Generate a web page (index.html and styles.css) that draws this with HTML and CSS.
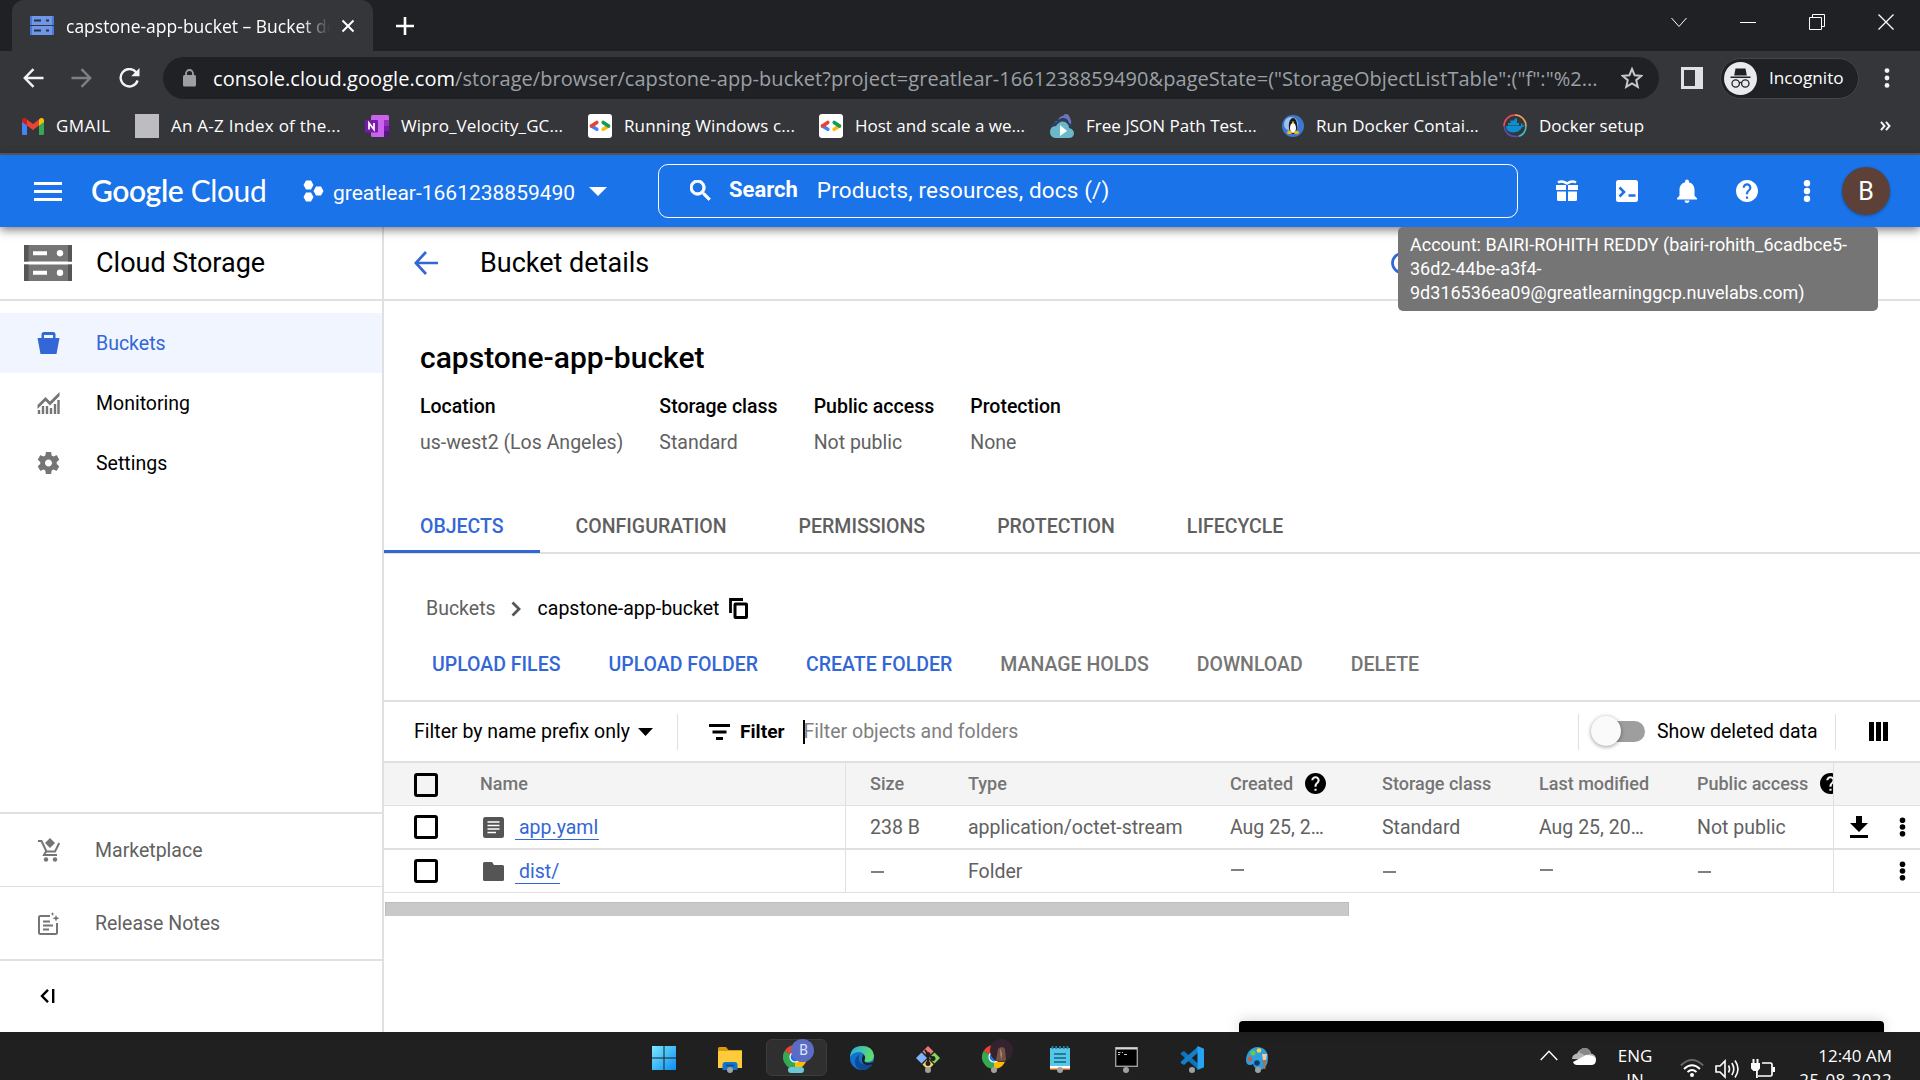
FILE: index.html
```html
<!DOCTYPE html>
<html lang="en">
<head>
<meta charset="utf-8">
<title>capstone-app-bucket – Bucket details</title>
<link rel="stylesheet" href="styles.css">
</head>
<body>
<svg class="defs" width="0" height="0">
  <defs>
    <symbol id="more" viewBox="0 0 8 24"><circle cx="4" cy="4.3" r="3.2"/><circle cx="4" cy="12" r="3.2"/><circle cx="4" cy="19.7" r="3.2"/></symbol>
    <symbol id="help" viewBox="2 2 20 20"><path d="M12 2C6.48 2 2 6.48 2 12s4.48 10 10 10 10-4.48 10-10S17.52 2 12 2zm1 17h-2v-2h2v2zm2.07-7.75l-.9.92C13.45 12.9 13 13.5 13 15h-2v-.5c0-1.1.45-2.1 1.17-2.83l1.24-1.26c.37-.36.59-.86.59-1.41 0-1.1-.9-2-2-2s-2 .9-2 2H8c0-2.21 1.79-4 4-4s4 1.79 4 4c0 .88-.36 1.68-.93 2.25z"/></symbol>
    <symbol id="gdev" viewBox="0 0 24 24"><rect width="24" height="24" rx="3" fill="#fff"/><g fill="none" stroke-width="3.6" stroke-linecap="round"><path d="M3.5 12l5.3 3.2" stroke="#4285f4"/><path d="M3.5 12l5.3-3.6" stroke="#ea4335"/><path d="M20.5 12l-5.3 3.2" stroke="#fbbc04"/><path d="M20.5 12l-5.3-3.6" stroke="#0f9d58"/></g></symbol>
    <symbol id="chrome" viewBox="0 0 24 24"><path d="M12 12L1.6 6A12 12 0 0 1 22.4 6z" fill="#ea4335"/><path d="M12 12L22.4 6A12 12 0 0 1 12 24z" fill="#fbbc04"/><path d="M12 12L12 24A12 12 0 0 1 1.6 6z" fill="#34a853"/><circle cx="12" cy="12" r="5.6" fill="#fff"/><circle cx="12" cy="12" r="4.4" fill="#1a73e8"/></symbol>
  </defs>
</svg>

<div class="browser">
  <div class="tabstrip">
    <div class="tab">
      <svg class="favicon" width="24" height="19" viewBox="0 0 24 19"><path fill="#7096e6" d="M0 0h24v9H0zM0 10h24v9H0z"/><path fill="#4b78d8" d="M0 0h2v9H0zM22 0h2v9h-2zM0 10h2v9H0zM22 10h2v9h-2z"/><path fill="#26324b" d="M4 3.5h7v2H4zM16 3.5h3v2h-3zM4 13.5h7v2H4zM16 13.5h3v2h-3z"/></svg>
      <span class="tab-title">capstone-app-bucket – Bucket details</span>
      <svg class="tab-close" width="14" height="14" viewBox="0 0 14 14"><path d="M1.5 1.5l11 11M12.5 1.5l-11 11" stroke="#fff" stroke-width="2"/></svg>
    </div>
    <svg class="tab-new" width="18" height="18" viewBox="0 0 18 18"><path d="M9 0v18M0 9h18" stroke="#fff" stroke-width="2.6"/></svg>
    <div class="win-controls">
      <svg width="16" height="16" viewBox="0 0 16 16"><path d="M.5 4l7.500 8.500L15.500 4"/></svg>
      <svg width="16" height="16" viewBox="0 0 16 16"><path d="M0 8.500h16"/></svg>
      <svg width="16" height="16" viewBox="0 0 16 16"><path d="M.5 3.500h12v12H.5zM3.500 3V.5h12v12H13"/></svg>
      <svg width="16" height="16" viewBox="0 0 16 16"><path d="M.5.500l15 15M15.500.500l-15 15" stroke-width="1.300"/></svg>
    </div>
  </div>
  <div class="toolbar">
    <div class="nav">
      <svg width="21" height="20" viewBox="0 0 21 20"><path d="M10.500 1.200L1.800 10l8.700 8.800M1.800 10H20.500" stroke="#f1f3f4"/></svg>
      <svg width="21" height="20" viewBox="0 0 21 20"><path d="M10.500 1.200l8.700 8.800-8.700 8.800M19.200 10H.5" stroke="#7d8084"/></svg>
      <svg width="21" height="20" viewBox="0 0 21 20"><path d="M17.300 4.500A8.700 8.700 0 1 0 18.600 12.500" stroke="#f1f3f4"/><path d="M20.500 0v8.300h-8.300z" fill="#f1f3f4" stroke="none"/></svg>
    </div>
    <div class="omnibox">
      <svg width="13" height="18" viewBox="0 0 13 18"><path d="M3 8V4.500a3.500 3.500 0 0 1 7 0V8" fill="none" stroke="#9aa0a6" stroke-width="1.800"/><rect y="6" width="13" height="11.500" rx="1.500" fill="#9aa0a6"/></svg>
      <span class="url"><b>console.cloud.google.com</b>/storage/browser/capstone-app-bucket?project=greatlear-1661238859490&amp;pageState=("StorageObjectListTable":("f":"%2...</span>
      <svg class="star" width="22" height="22" viewBox="0 0 22 22"><path d="M11 2l2.600 6.200 6.700.600-5.100 4.400 1.600 6.600-5.800-3.500-5.800 3.500 1.600-6.600L1.700 8.800l6.700-.600z" fill="none" stroke="#c4c7cb" stroke-width="2"/></svg>
    </div>
    <svg class="panel" width="22" height="22" viewBox="0 0 22 22"><path fill="#dfe1e5" fill-rule="evenodd" d="M0 0h22v22H0zM3 3v16h11V3z"/></svg>
    <div class="incognito">
      <svg width="33" height="33" viewBox="0 0 33 33"><circle cx="16.500" cy="16.500" r="16.500" fill="#e8eaed"/><path fill="#202124" d="M11.500 6.500h10l1.300 7h-12.600zM6.500 14.500h20v1.500h-20z"/><g fill="none" stroke="#202124" stroke-width="1.300"><circle cx="11.700" cy="21.500" r="3.700"/><circle cx="21.300" cy="21.500" r="3.700"/><path d="M15.400 20.800q1.100-.8 2.200 0"/></g></svg>
      <span>Incognito</span>
    </div>
    <svg class="menu-dots" width="6" height="20" viewBox="0 0 6 20"><g fill="#f1f3f4"><circle cx="3" cy="2.600" r="2.400"/><circle cx="3" cy="10" r="2.400"/><circle cx="3" cy="17.400" r="2.400"/></g></svg>
  </div>
  <div class="bookmarks">
    <div class="bm bm-1"><svg width="22" height="17" viewBox="0 0 22 17"><path fill="#4285f4" d="M0 3h5v14H1.500A1.500 1.500 0 0 1 0 15.500z"/><path fill="#34a853" d="M17 3h5v12.500a1.500 1.500 0 0 1-1.500 1.500H17z"/><path fill="#ea4335" d="M5 1.500l6 4.500 6-4.500v6L11 12 5 7.500z"/><path fill="#c5221f" d="M0 2.500A2.400 2.400 0 0 1 4 .6l1 .9v6L0 4z"/><path fill="#fbbc04" d="M22 2.500A2.400 2.400 0 0 0 18 .6l-1 .9v6L22 4z"/></svg><span>GMAIL</span></div>
    <div class="bm bm-2"><i class="blank"></i><span>An A-Z Index of the...</span></div>
    <div class="bm bm-3"><svg width="24" height="22" viewBox="0 0 24 22"><rect x="6" width="18" height="22" rx="1.500" fill="#ca64ea"/><path d="M19 5h5v6h-5z" fill="#9332bf"/><path d="M19 11h5v6h-5z" fill="#7719aa"/><path d="M19 16h5v6h-5z" fill="#5b1380"/><rect y="5" width="13" height="12.500" rx="1" fill="#7719aa"/><path d="M4 14.500V8l5 6.500V8" fill="none" stroke="#fff" stroke-width="1.700"/></svg><span>Wipro_Velocity_GC...</span></div>
    <div class="bm bm-4"><svg width="24" height="24"><use href="#gdev"/></svg><span>Running Windows c...</span></div>
    <div class="bm bm-5"><svg width="24" height="24"><use href="#gdev"/></svg><span>Host and scale a we...</span></div>
    <div class="bm bm-6"><svg width="24" height="24" viewBox="0 0 24 24"><path d="M3 11q1-4 5-4 1-5 5-5 1-2 3-2 3 0 4 4 2 3 1 6z" fill="#6f74b8"/><path d="M1 13q1-5 6-5 2-4 6-4 5 0 6 5 3 1 4 4z" fill="#2b3f63"/><path d="M5 24q-5-1-5-6 0-6 6-6 4-6 9-4 4 2 4 6 5 1 5 6-1 4-5 4z" fill="#6bb8c8"/><path d="M10 11l7 6-7 5z" fill="#fff"/></svg><span>Free JSON Path Test...</span></div>
    <div class="bm bm-7"><svg width="22" height="22" viewBox="0 0 22 22"><circle cx="11" cy="11" r="11" fill="#3c78d0"/><circle cx="9" cy="9" r="7" fill="#9cc2ee"/><ellipse cx="11" cy="11" rx="4.200" ry="8" fill="#16181c"/><ellipse cx="11" cy="13" rx="3" ry="5" fill="#fff"/><ellipse cx="7.500" cy="17.500" rx="2.600" ry="1.800" fill="#f5b417"/><ellipse cx="14.500" cy="17.500" rx="2.600" ry="1.800" fill="#f5b417"/><path d="M9.500 6.500h3L11 9z" fill="#f5b417"/></svg><span>Run Docker Contai...</span></div>
    <div class="bm bm-8"><svg width="24" height="24" viewBox="0 0 24 24"><g fill="none" stroke-width="1.600"><path d="M1 12A11 11 0 0 1 12 1" stroke="#ef4d5d"/><path d="M12 1a11 11 0 0 1 11 11" stroke="#f2a65a"/><path d="M23 12a11 11 0 0 1-7 10.200" stroke="#35c6c9"/><path d="M16 22.200Q3 24 1 12" stroke="#5b4ba8"/></g><path d="M3 12h15q-.5-2 .6-3 1.200 1 1 2.400 1.600-.4 2.400.2-.8 1.500-2.800 1.500Q17 18.500 10 18.500 3.500 18.500 3 12z" fill="#0b8fd0"/><path d="M5 9h11v2.500H5zM7.500 6.500H14V9H7.500zM11.500 4.500H14v2h-2.500z" fill="#0b8fd0"/></svg><span>Docker setup</span></div>
    <svg class="overflow" width="11" height="10" viewBox="0 0 11 10"><path d="M1 .8L4.500 5 1 9.200M6 .8L9.500 5 6 9.200" fill="none" stroke="#f1f3f4" stroke-width="2"/></svg>
  </div>
</div>

<header class="gc-header">
  <svg class="burger" width="28" height="19" viewBox="0 0 28 19"><path d="M0 1.500h28M0 9.500h28M0 17.500h28" stroke="#fff" stroke-width="2.800"/></svg>
  <span class="logo"><b>Google</b> Cloud</span>
  <div class="project">
    <svg width="21" height="22" viewBox="0 0 21 22"><g fill="#fff"><path d="M3 .5h5l2.500 4.500L8 9.500H3L.5 5zM3 12.500h5l2.500 4.500L8 21.500H3L.5 17zM13 6.500h5l2.500 4.500-2.500 4.500h-5L10.500 11z"/></g></svg>
    <span>greatlear-1661238859490</span>
    <svg width="18" height="9" viewBox="0 0 18 9"><path d="M0 0h18L9 9z" fill="#fff"/></svg>
  </div>
  <div class="search">
    <svg width="21" height="21" viewBox="3 3 18 18"><path fill="#fff" stroke="#fff" stroke-width=".8" d="M15.500 14h-.79l-.28-.27C15.410 12.590 16 11.110 16 9.500 16 5.910 13.090 3 9.500 3S3 5.910 3 9.500 5.910 16 9.500 16c1.610 0 3.090-.59 4.230-1.570l.27.28v.79l5 4.990L20.490 19l-4.990-5zm-6 0C7.010 14 5 11.990 5 9.500S7.010 5 9.500 5 14 7.010 14 9.500 11.990 14 9.500 14z"/></svg>
    <b>Search</b><span>Products, resources, docs (/)</span>
  </div>
  <div class="gc-icons">
    <svg width="22" height="22" viewBox="0 0 22 22"><path fill="#fff" d="M0 5h10v5H0zM12 5h10v5H12zM1 11.500h9V21H2.500A1.500 1.500 0 0 1 1 19.500zM12 11.500h9v8a1.500 1.500 0 0 1-1.500 1.500H12z"/><path d="M2 2.500Q6 0 11 3.500 16 0 20 2.500" fill="none" stroke="#fff" stroke-width="2.600"/></svg>
    <svg width="22" height="22" viewBox="0 0 22 22"><rect width="22" height="22" rx="2.500" fill="#fff"/><path d="M3.500 7.500L8 12l-4.500 4.500M12.500 15.500h7" fill="none" stroke="#1a73e8" stroke-width="2.600"/></svg>
    <svg width="20" height="24" viewBox="4 2 16 20" preserveAspectRatio="none"><path fill="#fff" d="M12 22c1.100 0 2-.9 2-2h-4c0 1.100.9 2 2 2zm6-6v-5c0-3.070-1.630-5.640-4.500-6.320V4c0-.83-.67-1.500-1.500-1.500s-1.500.67-1.500 1.500v.68C7.640 5.360 6 7.920 6 11v5l-2 2v1h16v-1l-2-2z"/></svg>
    <svg width="22" height="22" fill="#fff"><use href="#help"/></svg>
    <svg width="8" height="24" fill="#fff"><use href="#more"/></svg>
  </div>
  <div class="avatar">B</div>
</header>

<div class="console">
  <aside class="sidebar">
    <div class="product">
      <svg width="48" height="36" viewBox="0 0 48 36"><path fill="#757575" d="M0 0h48v16.500H0zM0 19.500h48V36H0z"/><path fill="#555" d="M0 0h4.500v16.500H0zM44 0h4v16.500h-4zM0 19.500h4.500V36H0zM44 19.500h4V36h-4z"/><path fill="#fff" d="M9 6.200h14v4H9zM9 25.700h14v4H9z"/><circle cx="36" cy="8.200" r="3.200" fill="#fff"/><circle cx="36" cy="27.700" r="3.200" fill="#fff"/></svg>
      <span>Cloud Storage</span>
    </div>
    <nav class="side-nav">
      <a class="side-item active"><svg width="22" height="22" viewBox="0 0 22 22"><path fill="#3367d6" fill-rule="evenodd" d="M4 6V2.500Q4 0 6.500 0h9Q18 0 18 2.500V6h4l-3 16H3L0 6zM6.500 6h9V3h-9z"/></svg><span>Buckets</span></a>
      <a class="side-item"><svg width="22" height="22" viewBox="0 0 22 22"><path d="M0 13L8 5l4.500 4.500L22 0v4l-9.500 9.500L8 9l-8 8z" fill="#757575"/><path d="M1.500 22v-4M5.500 22v-8M9.500 22v-8M13.500 22v-6M17.500 22V12M21 22V8" stroke="#757575" stroke-width="2.400"/></svg><span>Monitoring</span></a>
      <a class="side-item"><svg width="22" height="22" viewBox="2 2 20 20"><path fill="#757575" d="M19.430 12.980c.04-.32.07-.64.07-.98s-.03-.66-.07-.98l2.110-1.650c.19-.15.24-.42.12-.64l-2-3.460c-.12-.22-.39-.3-.61-.22l-2.490 1c-.52-.4-1.080-.73-1.690-.98l-.38-2.650C14.460 2.180 14.250 2 14 2h-4c-.25 0-.46.18-.49.42l-.38 2.650c-.61.25-1.170.59-1.690.98l-2.490-1c-.23-.09-.49 0-.61.22l-2 3.460c-.13.22-.07.49.12.64l2.110 1.650c-.04.32-.07.65-.07.98s.03.66.07.98l-2.110 1.650c-.19.15-.24.42-.12.64l2 3.460c.12.22.39.3.61.22l2.490-1c.52.4 1.080.73 1.690.98l.38 2.650c.03.24.24.42.49.42h4c.25 0 .46-.18.49-.42l.38-2.650c.61-.25 1.170-.59 1.690-.98l2.490 1c.23.09.49 0 .61-.22l2-3.460c.12-.22.07-.49-.12-.64l-2.110-1.650zM12 15.200c-1.770 0-3.200-1.430-3.200-3.200s1.430-3.200 3.200-3.200 3.200 1.430 3.200 3.200-1.430 3.200-3.200 3.200z"/></svg><span>Settings</span></a>
    </nav>
    <div class="side-foot">
      <a class="foot-item"><svg width="22" height="24" viewBox="0 0 22 24"><g fill="none" stroke="#757575" stroke-width="2"><path d="M0 3h3.500l5 10.500h8.500L21.200 5M8 13.500l-2 3.500h13"/></g><path d="M12 0l5 5-5 5-5-5z" fill="#757575"/><circle cx="8" cy="21.500" r="2.200" fill="#757575"/><circle cx="17" cy="21.500" r="2.200" fill="#757575"/></svg><span>Marketplace</span></a>
      <a class="foot-item"><svg width="22" height="23" viewBox="0 0 22 23"><path d="M12 4H2.500Q1 4 1 5.500v15Q1 22 2.500 22h15q1.500 0 1.500-1.500V11M5 9.500h7M5 13.500h10M5 17.500h6" fill="none" stroke="#757575" stroke-width="2"/><path d="M18 3l1 2.300L21.500 6.200 19 7.200 18 9.500l-1-2.300-2.500-1L17 5.300zM14.500 0l.6 1.400L16.500 2l-1.400.6-.6 1.400-.6-1.400L12.500 2l1.400-.6z" fill="#757575"/></svg><span>Release Notes</span></a>
      <a class="foot-item collapse"><svg width="15" height="14" viewBox="0 0 15 14"><path d="M8 .8L2 7l6 6.200M13.200 0v14" fill="none" stroke="#000" stroke-width="2.400"/></svg></a>
    </div>
  </aside>

  <main class="main">
    <div class="page-head">
      <svg width="24" height="24" viewBox="0 0 24 24"><path d="M12 1L1.800 12 12 23M1.800 12H24" fill="none" stroke="#3367d6" stroke-width="2.700"/></svg>
      <h1>Bucket details</h1>
      <svg class="refresh" width="24" height="24" viewBox="0 0 24 24"><circle cx="12" cy="12" r="9.500" fill="none" stroke="#3367d6" stroke-width="2.700"/></svg>
    </div>
    <section class="summary">
      <h2>capstone-app-bucket</h2>
      <dl class="facts">
        <div><dt>Location</dt><dd>us-west2 (Los Angeles)</dd></div>
        <div><dt>Storage class</dt><dd>Standard</dd></div>
        <div><dt>Public access</dt><dd>Not public</dd></div>
        <div><dt>Protection</dt><dd>None</dd></div>
      </dl>
    </section>
    <div class="tabs"><a class="current">OBJECTS</a><a>CONFIGURATION</a><a>PERMISSIONS</a><a>PROTECTION</a><a>LIFECYCLE</a></div>
    <div class="crumbs">
      <span class="muted">Buckets</span>
      <svg width="10" height="16" viewBox="0 0 10 16"><path d="M1.500 1.500L8 8l-6.500 6.500" fill="none" stroke="#555" stroke-width="2.800"/></svg>
      <span class="here">capstone-app-bucket</span>
      <svg class="copy" width="19" height="21" viewBox="0 0 19 21"><path d="M1.500 15V1.500H14" fill="none" stroke="#000" stroke-width="2.800"/><rect x="6" y="6" width="11.500" height="13.500" rx=".5" fill="none" stroke="#000" stroke-width="3"/></svg>
    </div>
    <div class="actions"><a>UPLOAD FILES</a><a>UPLOAD FOLDER</a><a>CREATE FOLDER</a><a class="off">MANAGE HOLDS</a><a class="off">DOWNLOAD</a><a class="off">DELETE</a></div>
    <div class="filterbar">
      <div class="scope">Filter by name prefix only <svg width="15" height="8" viewBox="0 0 15 8"><path d="M0 0h15L7.500 8z"/></svg></div>
      <div class="filter">
        <svg width="21" height="16" viewBox="0 0 21 16"><path d="M0 1.500h21M3.500 8h14M7 14.500h7" stroke="#000" stroke-width="2.900"/></svg>
        <b>Filter</b>
        <span class="field">Filter objects and folders</span>
      </div>
      <div class="deleted"><i class="switch"></i><span>Show deleted data</span></div>
      <div class="columns"><svg width="19" height="19" viewBox="0 0 19 19"><path d="M0 0h5v19H0zM7 0h5v19H7zM14 0h5v19h-5z"/></svg></div>
    </div>
    <div class="grid">
      <div class="row head">
        <div class="c-check"><i class="box"></i></div><div class="c-name">Name</div><div>Size</div><div>Type</div><div class="with-help">Created <svg width="21" height="21"><use href="#help"/></svg></div><div>Storage class</div><div>Last modified</div><div class="with-help c-access">Public access <svg width="21" height="21"><use href="#help"/></svg></div><div class="c-end"></div>
      </div>
      <div class="row first">
        <div class="c-check"><i class="box"></i></div>
        <div class="c-name link"><svg width="21" height="21" viewBox="0 0 21 21"><rect width="21" height="21" rx="2.500" fill="#555"/><path d="M4.500 5h12M4.500 8.500h12M4.500 12h12M4.500 15.500h8.500" stroke="#fff" stroke-width="1.600"/></svg><a>app.yaml</a></div>
        <div>238 B</div><div>application/octet-stream</div><div>Aug 25, 2…</div><div>Standard</div><div>Aug 25, 20…</div><div class="c-access">Not public</div>
        <div class="c-end"><svg width="18" height="22" viewBox="0 0 18 22"><path d="M6 0h6v7h6l-9 9-9-9h6zM0 19h18v3H0z"/></svg><svg width="7" height="22"><use href="#more"/></svg></div>
      </div>
      <div class="row second">
        <div class="c-check"><i class="box"></i></div>
        <div class="c-name link"><svg width="21" height="19" viewBox="0 0 21 19"><path d="M1.500 0H9l2 3h8.500Q21 3 21 4.500v13Q21 19 19.500 19h-18Q0 19 0 17.500v-16Q0 0 1.500 0z" fill="#555"/></svg><a>dist/</a></div>
        <div><i class="dash"></i></div><div>Folder</div><div><i class="dash high"></i></div><div><i class="dash"></i></div><div><i class="dash high"></i></div><div class="c-access"><i class="dash"></i></div>
        <div class="c-end"><svg width="7" height="22"><use href="#more"/></svg></div>
      </div>
    </div>
    <div class="scrollbar"></div>
    <div class="toast"></div>
  </main>
</div>

<div class="tooltip">Account: BAIRI-ROHITH REDDY (bairi-rohith_6cadbce5-<br>36d2-44be-a3f4-<br>9d316536ea09@greatlearninggcp.nuvelabs.com)</div>

<footer class="taskbar">
  <div class="apps">
    <div class="app"><svg width="24" height="24" viewBox="0 0 24 24"><defs><linearGradient id="win" x1="0" y1="0" x2="1" y2="1"><stop offset="0" stop-color="#7ae8ff"/><stop offset="1" stop-color="#0a8df0"/></linearGradient></defs><path fill="url(#win)" d="M0 0h11.500v11.500H0zM12.500 0H24v11.500H12.500zM0 12.500h11.500V24H0zM12.500 12.500H24V24H12.500z"/></svg></div>
    <div class="app run"><svg width="24" height="24" viewBox="0 0 24 24"><path d="M0 2.500Q0 1 1.500 1H8l2.500 3H24v4H0z" fill="#d99a0b"/><path d="M0 5h24v17H0z" fill="#fdcb3c"/><path d="M4.500 24v-5q0-3 3-3h9q3 0 3 3v5z" fill="#1175c8"/><path d="M8 19.500h8" stroke="#0a4b94" stroke-width="1.500"/></svg></div>
    <div class="app run active"><svg width="34" height="31" viewBox="0 0 34 31"><use href="#chrome" x="3" y="6" width="24" height="24"/><circle cx="22.500" cy="11.500" r="11.500" fill="#5b6cc4"/></svg><em>B</em></div>
    <div class="app"><svg width="24" height="24" viewBox="0 0 24 24"><defs><linearGradient id="edge" x1="0" y1="0" x2="1" y2=".3"><stop offset="0" stop-color="#2ba8e8"/><stop offset="1" stop-color="#5fdc6c"/></linearGradient></defs><circle cx="12" cy="12" r="12" fill="#1272cc"/><path d="M0 11Q1 0 12 0t12 9.500q0 6-6.500 6.500-4 0-3-2.500 1-2 .200-4Q13 6 8.500 6 3 6.500 0 11z" fill="url(#edge)"/><path d="M9 9q-2 9 7 10 4 .300 7-1.500Q19 24 12 24 5 22.500 5 16q0-5 4-7z" fill="#0d4a97"/><path d="M13 8.500q3.500 2 1.300 6 0 2 3.500 2.500 3 0 5-1l.7 1.500q-3 2-7.500 1.500-6-1.500-3-10.500z" fill="#202020"/></svg></div>
    <div class="app run"><svg width="24" height="24" viewBox="0 0 24 24"><path d="M12 0l5.500 5.500L12 11 6.500 5.500z" fill="#f07878"/><path d="M5.500 6.500L11 12l-5.500 5.500L0 12z" fill="#80b3ff"/><path d="M18.500 6.500L24 12l-5.500 5.500L13 12z" fill="#87d859"/><path d="M12 13l5.500 5.500L12 24l-5.500-5.500z" fill="#ffd968"/><g stroke="#202020" stroke-width="2" fill="#202020"><path d="M9 4l3 4v10M12 8l4.500 4.500" fill="none"/><circle cx="12" cy="8.500" r="1.500"/><circle cx="12" cy="17.500" r="1.500"/><circle cx="17" cy="12.500" r="1.500"/></g></svg></div>
    <div class="app run"><svg class="wide" width="34" height="31" viewBox="0 0 34 31"><use href="#chrome" x="3" y="6" width="24" height="24"/><circle cx="22.500" cy="11.500" r="11.500" fill="#33232f"/><path d="M19 10q4-4 7 0l1 11q-5 3-10 0z" fill="#735242"/><path d="M21 9l2 6-1 6z" fill="#b99a80"/></svg></div>
    <div class="app run"><svg width="20" height="24" viewBox="0 0 20 24"><rect y="2" width="20" height="20" fill="#57c7e8"/><path d="M0 20h20v4H0z" fill="#fff"/><path d="M0 22.500h20V24H0z" fill="#c96b1c"/><path d="M4 8h12M4 12h12M4 16h12" stroke="#17657f" stroke-width="1.400"/><path d="M2.500 0v3M6.200 0v3M10 0v3M13.800 0v3M17.500 0v3" stroke="#2487a6" stroke-width="1.800"/></svg></div>
    <div class="app run"><svg class="cmd" width="23" height="20" viewBox="0 0 23 20"><rect x=".7" y=".7" width="21.600" height="18.600" fill="#000" stroke="#9c9c9c" stroke-width="1.400"/><path d="M1 1.500h21" stroke="#d8d8d8" stroke-width="2"/><path d="M3 5.500h2.500M7 5.500h1M9 7.500h3M3 7.500h2" stroke="#ccc" stroke-width="1.200"/></svg></div>
    <div class="app run"><svg width="24" height="24" viewBox="0 0 24 24"><path d="M1.500 6.500L4 5l14 12.500v6L.5 8z" fill="#0d74bb"/><path d="M1.500 17.500L4 19 18 6.500v-6L.5 16z" fill="#1180cc"/><path d="M17.500 0L24 2.800v18.400L17.500 24z" fill="#27a3f2"/></svg></div>
    <div class="app run"><svg width="24" height="24" viewBox="0 0 24 24"><path d="M12 1C4 1 0 8 0 14q0 5 4 5 2 0 3-1 2 6 7 6 8-2 8-12T12 1z" fill="#2b9fe0"/><circle cx="7" cy="7" r="2.500" fill="#6ccb3c"/><circle cx="4" cy="13" r="2.200" fill="#e8532d"/><circle cx="13" cy="4.500" r="2.300" fill="#fcd53f"/><circle cx="11" cy="17" r="2.800" fill="#123b66"/><path d="M16 8h5l-1 6h-3z" fill="#f2c9a1"/><path d="M17 14h3l-.6 9h-2z" fill="#b5713c"/></svg></div>
  </div>
  <div class="tray">
    <svg width="18" height="11" viewBox="0 0 18 11"><path d="M.7 10L9 1.300 17.300 10" fill="none" stroke="#fff" stroke-width="1.400"/></svg>
    <svg width="24" height="17" viewBox="0 0 24 17"><path d="M0 11q0-4.500 5-5.500Q8 0 13 0q5 .5 6 5.500 5 1 5 6z" fill="#b5b5b5"/><path d="M7 4q2-4 6-4 5 .5 6 5.500l-6 2z" fill="#888"/><path d="M1 14l13-7q10 0 10 5 0 5-5 5H5q-3 0-4-3z" fill="#fff"/></svg>
    <div class="lang">ENG<br>IN</div>
    <svg class="low" width="24" height="18" viewBox="0 0 24 18"><g fill="none" stroke="#fff" stroke-width="1.800"><path d="M.8 6.500q11.200-11 22.400 0" stroke="#666"/><path d="M4 10q8-7.500 16 0M7.500 13q4.500-4 9 0"/></g><circle cx="12" cy="16" r="2" fill="#fff"/></svg>
    <svg class="low" width="25" height="20" viewBox="0 0 25 20"><g fill="none" stroke="#fff" stroke-width="1.600"><path d="M1 7h4l5-5v16l-5-5H1zM13.500 6.500q2 3.500 0 7M16.800 4q4 6 0 12M20 1.500q6 8.500 0 17"/></g></svg>
    <svg class="low" width="24" height="19" viewBox="0 0 24 19"><path d="M11 4h8.500q1.500 0 1.500 1.500v10q0 1.500-1.500 1.500H7" fill="none" stroke="#fff" stroke-width="1.700"/><path d="M21.500 8H24v5h-2.500zM0 4h9v5.500L6.800 12v7H5v-7H2.500L0 9.500zM1.500 0h2v4h-2zM5.500 0h2v4h-2z" fill="#fff"/></svg>
    <div class="clock">12:40 AM<br><span>25-08-2022</span></div>
  </div>
</footer>
</body>
</html>
```
FILE: styles.css
```css
* { box-sizing: border-box; }
html, body { margin: 0; width: 1920px; height: 1080px; overflow: hidden; }
body { position: relative; display: flex; flex-direction: column; background: #fff; font: 19.5px/24px Roboto, sans-serif; color: #000; white-space: nowrap; }
svg { flex: none; display: block; }
.defs { position: absolute; }
h1, h2, dl, dd, dt { margin: 0; font-weight: 400; }

/* Browser chrome */
.browser { flex: none; height: 155px; background: #35363a; border-bottom: 2px solid #5b5c5f; font-family: "Open Sans", sans-serif; color: #fff; }
.tabstrip { height: 51px; display: flex; align-items: center; padding-left: 12px; background: #202124; }
.tab { width: 361px; height: 51px; display: flex; align-items: center; padding-left: 18px; background: #35363a; border-radius: 12px 12px 0 0; }
.tab-title { width: 264px; margin-left: 12px; overflow: hidden; font-size: 17.5px; -webkit-mask-image: linear-gradient(90deg, #000 235px, transparent 264px); mask-image: linear-gradient(90deg, #000 235px, transparent 264px); }
.tab-close { margin-left: 11px; }
.tab-new { margin-left: 23px; }
.win-controls { margin: -8px 26px 0 auto; display: flex; gap: 53px; fill: none; stroke: #fff; stroke-width: 1; }
.toolbar { height: 54px; display: flex; align-items: center; padding-left: 23px; }
.nav { width: 140px; display: flex; gap: 27px; fill: none; stroke-width: 2.4; }
.omnibox { width: 1496px; height: 42px; display: flex; align-items: center; padding: 0 16px 0 20px; border-radius: 21px; background: #202124; }
.url { width: 1390px; margin-left: 17px; padding-top: 1px; font-size: 20px; letter-spacing: .05px; color: #9aa0a6; }
.url b { font-weight: 400; color: #fff; }
.star { margin-left: auto; }
.panel { margin-left: 22px; }
.incognito { width: 139px; height: 41px; margin-left: 17px; display: flex; align-items: center; gap: 12px; padding-left: 3px; border: 1px solid #45464a; border-radius: 21px; background: #202124; font-size: 17.2px; }
.menu-dots { margin-left: 25px; }
.bookmarks { height: 42px; display: flex; align-items: center; padding-left: 22px; font-size: 17px; }
.bm { display: flex; align-items: center; gap: 12px; }
.blank { width: 24px; height: 24px; background: #bdbcc1; }
.bm-1 { width: 113px; letter-spacing: .5px; }
.bm-2 { width: 230px; letter-spacing: .25px; }
.bm-3 { width: 223px; letter-spacing: .1px; }
.bm-4 { width: 231px; letter-spacing: .13px; }
.bm-5 { width: 231px; }
.bm-6 { width: 232px; }
.bm-7 { width: 221px; letter-spacing: .1px; }
.overflow { margin: 0 29px 0 auto; }

/* Console header */
.gc-header { position: relative; z-index: 2; flex: none; height: 72px; display: flex; align-items: center; padding-left: 34px; background: #1a73e8; color: #fff; box-shadow: 0 3px 9px rgba(0,0,0,.5); font-size: 21px; }
.logo { width: 212px; margin-left: 29px; padding-bottom: 3px; font: 30px/36px Lato, sans-serif; letter-spacing: -.4px; }
.logo b { font-weight: 600; }
.project { width: 355px; display: flex; align-items: center; gap: 9px; }
.project span { padding-top: 3px; }
.project svg:last-child { margin-left: 5px; }
.search { width: 860px; height: 54px; display: flex; align-items: center; padding: 0 0 2px 31px; border: 1px solid #fff; border-radius: 10px; font-size: 22.5px; }
.search b { margin: 0 19px 0 18px; font-size: 22px; }
.search span { letter-spacing: .14px; }
.gc-icons { width: 324px; display: flex; align-items: center; padding-left: 37.5px; }
.gc-icons svg { margin-right: 38px; }
.gc-icons svg:nth-child(3) { margin: 0 39px 0 1px; }
.gc-icons svg:nth-child(4) { margin-right: 45px; }
.gc-icons svg:nth-child(5) { margin-right: 0; }
.avatar { width: 48px; height: 48px; border-radius: 50%; background: #5d4037; text-align: center; font: 25px/49px Roboto, sans-serif; box-shadow: 0 1px 3px rgba(0,0,0,.3); }

/* Console body */
.console { flex: none; height: 805px; display: flex; }
.sidebar { width: 384px; display: flex; flex-direction: column; border-right: 2px solid #e0e0e0; }
.product { height: 74px; display: flex; align-items: center; gap: 24px; padding-left: 24px; border-bottom: 2px solid #e0e0e0; font-size: 27px; }
.side-nav { padding-top: 12px; }
.side-item { height: 60px; display: flex; align-items: center; gap: 36px; padding-left: 37px; }
.side-item.active { background: #f0f5ff; color: #3367d6; }
.side-item svg { width: 23px; }
.side-item span, .foot-item span { padding-top: 2px; }
.side-foot { margin-top: auto; }
.foot-item { height: 73px; display: flex; align-items: center; gap: 35px; padding-left: 38px; border-top: 2px solid #e0e0e0; color: #616161; }
.foot-item:nth-child(1) { height: 74px; }
.foot-item:nth-child(2) { border-top-width: 1px; }
.foot-item.collapse { padding: 0 0 1px 40px; }
.main { position: relative; width: 1536px; }
.page-head { height: 74px; display: flex; align-items: center; padding-left: 30px; border-bottom: 2px solid #e0e0e0; }
.page-head h1 { width: 910px; margin-left: 42px; font-size: 27px; }
.summary { height: 200px; padding: 39px 36px 0; }
.summary h2 { font-size: 30px; line-height: 36px; font-weight: 500; }
.facts { display: flex; gap: 36px; margin-top: 19px; }
.facts dt { font-weight: 500; }
.facts dd { margin-top: 12px; color: #616161; }
.tabs { height: 53px; display: flex; border-bottom: 2px solid #e0e0e0; font-weight: 500; color: #5f5f5f; }
.tabs a { height: 52px; padding: 14px 36px 0; }
.tabs .current { color: #3367d6; border-bottom: 3px solid #3367d6; }
.crumbs { height: 98px; display: flex; align-items: center; padding: 11px 0 0 42px; }
.crumbs .muted { color: #616161; }
.crumbs svg { margin: 0 17px 0 15px; }
.crumbs .copy { margin: 0 0 0 10px; }
.actions { height: 48px; display: flex; gap: 48px; padding: 1px 48px 0; font-weight: 500; color: #3367d6; }
.actions .off { color: #757575; }
.filterbar { height: 63px; display: flex; align-items: center; border: solid #e0e0e0; border-width: 2px 0; }
.scope { width: 294px; height: 36px; display: flex; align-items: center; gap: 8px; padding-left: 30px; border-right: 1px solid #e0e0e0; }
.filter { flex: 1; display: flex; align-items: center; padding-left: 31px; }
.filter b { margin: 0 18px 0 10px; font-size: 19.2px; font-weight: 700; }
.field { border-left: 2px solid #000; text-indent: -1px; color: #808080; }
.deleted { width: 258px; height: 36px; display: flex; align-items: center; gap: 12px; padding-left: 22px; border: solid #e0e0e0; border-width: 0 1px; }
.switch { position: relative; width: 44px; height: 21px; border-radius: 11px; background: #9e9e9e; }
.switch::before { content: ""; position: absolute; left: -10px; top: -5px; width: 30px; height: 30px; border-radius: 50%; background: #fafafa; box-shadow: 0 1px 4px rgba(0,0,0,.4); }
.columns { width: 84px; padding-left: 33px; }

/* Object table */
.row { height: 43px; display: grid; grid-template-columns: 96px 365px 123px 262px 152px 157px 158px 136px 87px; border-bottom: 1px solid #e0e0e0; color: #616161; }
.row > div { display: flex; align-items: center; overflow: hidden; padding-top: 1px; }
.row > div:nth-child(3) { padding-left: 24px; border-left: 1px solid #e0e0e0; }
.row.head { background: #f4f4f4; font-size: 18px; font-weight: 500; color: #757575; }
.row.head > div { padding-top: 0; }
.row.first { height: 44px; border-bottom-width: 2px; }
.row .c-check { padding: 0 0 0 30px; }
.row.head .c-check { padding: 2px 0 0 30px; }
.box { width: 24px; height: 24px; border: 3px solid #000; border-radius: 3px; }
.c-name.link svg { margin: 0 11px 0 3px; }
.link a { padding: 1px 1px 0 4px; line-height: 23px; border-bottom: 1px solid #3367d6; color: #3367d6; }
.with-help svg { margin: -1px 0 0 12px; fill: #000; }
.row .c-end { justify-content: flex-end; gap: 31px; padding: 0 14px 0 0; border-left: 1px solid #e0e0e0; background: inherit; }
.dash { width: 13px; height: 2px; margin-left: 1px; background: #808080; }
.dash.high { margin-top: -3px; }
.scrollbar { width: 964px; height: 14px; margin: 9px 0 0 1px; background: #c9c9c9; border: 1px solid #bdbdbd; border-bottom: 0; }
.toast { position: absolute; left: 855px; bottom: 0; width: 645px; height: 11px; border-radius: 4px 4px 0 0; background: #000; box-shadow: 0 0 14px rgba(0,0,0,.2); }
.tooltip { position: absolute; z-index: 3; left: 1398px; top: 227px; width: 480px; height: 84px; padding: 6px 12px; border-radius: 5px; background: #757575; color: #fff; font-size: 18px; }

/* Windows taskbar */
.taskbar { flex: none; height: 48px; display: flex; justify-content: space-between; background: #202020; color: #fff; }
.apps { display: flex; margin-left: 630.500px; }
.app { position: relative; width: 66.1px; height: 48px; display: flex; justify-content: center; padding-top: 14px; }
.app svg { position: relative; }
.app svg[width="34"] { margin-top: -7px; }
.app svg.wide { margin-left: 4px; }
.app svg.cmd { margin-top: 1px; }
.app.run::after { content: ""; position: absolute; left: 30px; top: 35px; width: 6px; height: 6px; border-radius: 3px; background: #a0a0a0; }
.app.active::before { content: ""; position: absolute; left: 3px; top: 7px; width: 59px; height: 35px; border: 1px solid #3c3c3c; border-radius: 6px; background: #2f2f2f; }
.app.active svg { margin-left: 3px; }
.app.active::after { left: 25px; width: 16px; background: #68c8d8; }
.app em { position: absolute; left: 35px; top: 6px; width: 12px; text-align: center; font: 14px/24px Roboto, sans-serif; color: #dfe3ff; }
.tray { display: flex; align-items: flex-start; padding: 16px 28px 0 0; font: 17px/24px "Open Sans", sans-serif; }
.tray svg:first-child { margin-top: 2px; }
.tray svg:nth-child(2) { margin: 0 0 0 14px; }
.tray .lang { width: 38px; margin: -4px 0 0 20px; text-align: center; }
.tray .low { margin: 11px 0 0 11px; }
.tray .lang + .low { margin-left: 26px; }
.clock { width: 117px; margin: -4px 0 0; text-align: right; }
.clock span { letter-spacing: .4px; }
```
